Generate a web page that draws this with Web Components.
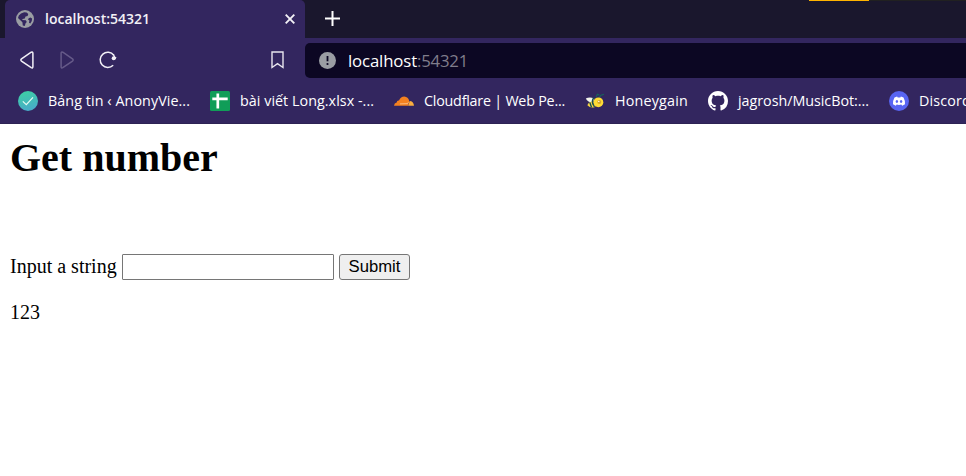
<!DOCTYPE html>
<html lang="vi"><head><meta charset="utf-8"><title>localhost:54321</title>
<style>html,body{margin:0;height:100%;overflow:hidden;background:#fff}</style></head>
<body><browser-window></browser-window>
<script>
const define = (name, html, ready) => customElements.define(name, class extends HTMLElement {
  connectedCallback() {
    if (!this.shadowRoot) this.attachShadow({mode:'open'}).innerHTML = html;
    if (ready) ready.call(this, this.shadowRoot);
  }
});

// A one-line label whose letters are spaced to fill a given width.
define('fit-label', `<style>:host{display:block;flex:none;white-space:nowrap}span{display:inline-block;white-space:pre}</style><span></span>`, function(root){
  const s = root.querySelector('span'), w = +this.getAttribute('width');
  s.textContent = this.getAttribute('text');
  const n = s.getBoundingClientRect().width;
  s.style.letterSpacing = ((w - n) / s.textContent.length) + 'px';
  this.style.width = w + 'px';
});

const icons = {
  globe:`<svg width="18" height="18" viewBox="0 0 18 18"><circle cx="9" cy="9" r="9" fill="#9a9da3"/><path d="M8.2 2.2 10.6 2.6 12.3 4 11.6 6 9.5 6.6 8.8 8.6 6.6 9 6.2 10 9.8 10.2 10.8 12 9.6 13.2 8.8 16 6.8 15.4 6.4 12.2 2 8.1 2.8 5.6 5 3.4zM12.7 8.2 14.4 7.6 16.1 8.5 15.8 11 14.3 13.6 13 12.8 13.4 10.6 12 9.6z" fill="#33265f"/></svg>`,
  close:`<svg width="10" height="10" viewBox="0 0 10 10"><path d="M.7.7 9.3 9.3M9.3.7.7 9.3" stroke="#f2f0f6" stroke-width="1.9"/></svg>`,
  plus:`<svg width="15" height="15" viewBox="0 0 15 15"><path d="M7.5 0V15M0 7.5H15" stroke="#fff" stroke-width="2"/></svg>`,
  back:`<svg width="14" height="18" viewBox="0 0 14 18"><path d="M11.2 1.2Q12.9.4 12.9 2.4V15.6Q12.9 17.6 11.2 16.7L1.5 10.1Q.2 9 1.5 7.9Z" fill="none" stroke="#f2f0f6" stroke-width="1.5"/></svg>`,
  forward:`<svg width="14" height="18" viewBox="0 0 14 18"><path d="M2.8 1.2Q1.1.4 1.1 2.4V15.6Q1.1 17.6 2.8 16.7L12.5 10.1Q13.8 9 12.5 7.9Z" fill="none" stroke="#665a89" stroke-width="1.5"/></svg>`,
  reload:`<svg width="18" height="18" viewBox="0 0 18 18"><path d="M14.8 4.2A7.6 7.6 0 1 0 14.2 14.2" fill="none" stroke="#f2f0f6" stroke-width="1.5"/><path d="M14.3 3.4 15.8 6.2" stroke="#f2f0f6" stroke-width="1.3"/><circle cx="14.7" cy="7.2" r="2" fill="#f2f0f6"/><path d="M15 5.6 17.6 6.5 15.7 9z" fill="#f2f0f6"/></svg>`,
  bookmark:`<svg width="13" height="18" viewBox="0 0 13 18"><path d="M1 1H12V16.5L6.5 12.7 1 16.5Z" fill="none" stroke="#e8e5ee" stroke-width="1.4"/></svg>`,
  info:`<svg width="17" height="17" viewBox="0 0 17 17"><circle cx="8.5" cy="8.5" r="8.5" fill="#9a9da3"/><path d="M8.5 4V9.3" stroke="#0c0723" stroke-width="1.8"/><circle cx="8.5" cy="12" r="1.1" fill="#0c0723"/></svg>`,
  check:`<svg width="20" height="20" viewBox="0 0 20 20"><defs><linearGradient id="g" x1="0" y1="0" x2=".3" y2="1"><stop stop-color="#3cd3a1"/><stop offset="1" stop-color="#48acc8"/></linearGradient></defs><circle cx="10" cy="10" r="10" fill="url(#g)"/><path d="M4.8 10.4 8.3 13.6 15 6.4" fill="none" stroke="#e4fbf4" stroke-width="1.2"/></svg>`,
  sheet:`<svg width="20" height="20" viewBox="0 0 20 20"><rect width="20" height="20" rx="1.5" fill="#109d58"/><path d="M2.3 7.9H17.7M7.8 2.5V17.5" stroke="#fff" stroke-width="2.7"/></svg>`,
  cloud:`<svg width="20" height="20" viewBox="0 0 20 20"><path d="M0 14.7Q.2 12 2.7 11.5 2.9 9.3 5 9.6 6.7 5.8 10.3 5.6 14.2 5.9 15.2 9.9L14.2 14.7Z" fill="#f48120"/><path d="M14.2 14.7 15.6 10Q19.5 10.2 20 14.7Z" fill="#faad3f"/><path d="M6 12.9 13.5 12.6 14.4 11.2" fill="none" stroke="#ffe2be" stroke-width=".6"/></svg>`,
  bee:`<svg width="20" height="20" viewBox="0 0 20 20"><path d="M11 6 12.4 3.3 14.3 4.1M14 6.8 16 4.2 19 3.2" fill="none" stroke="#17625c" stroke-width="1.2"/><path d="M.8 7.6Q4.5 5.4 9.2 7.5L8 11.5Q3 11.7.8 7.6Z" fill="#f4f5ec"/><path d="M2.4 14.2Q3.4 11 8 10L10.5 15.7Q6 18 2.4 14.2Z" fill="#f8d444"/><path d="M4.8 11.5 6.5 16.2M7.5 10.5 9.4 16" stroke="#184f51" stroke-width="1.4"/><path d="M9 6.5Q6.2 10 8.4 14" fill="none" stroke="#184f51" stroke-width="1.5"/><circle cx="13.4" cy="11.3" r="4.9" fill="#ffdb35"/><circle cx="14.3" cy="11.1" r="2" fill="#d6a72d"/><circle cx="13.8" cy="10.4" r=".7" fill="#fff"/></svg>`,
  github:`<svg width="20" height="20" viewBox="0 0 16 16"><path fill="#fff" fill-rule="evenodd" d="M8 0C3.58 0 0 3.58 0 8c0 3.54 2.29 6.53 5.47 7.59.4.07.55-.17.55-.38 0-.19-.01-.82-.01-1.49-2.01.37-2.53-.49-2.69-.94-.09-.23-.48-.94-.82-1.13-.28-.15-.68-.52-.01-.53.63-.01 1.08.58 1.23.82.72 1.21 1.87.87 2.33.66.07-.52.28-.87.51-1.07-1.78-.2-3.64-.89-3.64-3.95 0-.87.31-1.59.82-2.15-.08-.2-.36-1.02.08-2.12 0 0 .67-.21 2.2.82.64-.18 1.32-.27 2-.27s1.36.09 2 .27c1.53-1.04 2.2-.82 2.2-.82.44 1.1.16 1.92.08 2.12.51.56.82 1.27.82 2.15 0 3.07-1.87 3.75-3.65 3.95.29.25.54.73.54 1.48 0 1.07-.01 1.93-.01 2.2 0 .21.15.46.55.38A8.01 8.01 0 0 0 16 8c0-4.42-3.58-8-8-8z"/></svg>`,
  discord:`<svg width="20" height="20" viewBox="0 0 20 20"><circle cx="10" cy="10" r="10" fill="#5865f2"/><path fill="#fff" fill-rule="evenodd" d="M8.1 5.5 5.5 6.4Q3.7 9.5 4 13.3L6.8 14.8 7.7 13.6Q10 14.2 12.3 13.6L13.2 14.8 16 13.3Q16.3 9.5 14.5 6.4L11.9 5.5 11.3 6.5H8.7ZM7.9 9Q9.2 9.2 9.2 10.5 9.1 11.8 7.9 11.9 6.7 11.8 6.6 10.5 6.7 9.2 7.9 9ZM12.1 9Q13.3 9.2 13.4 10.5 13.3 11.8 12.1 11.9 10.9 11.8 10.8 10.5 10.9 9.2 12.1 9Z"/></svg>`
};
define('ui-icon', `<style>:host{display:block;flex:none}svg{display:block}</style><div></div>`, function(root){
  root.querySelector('div').innerHTML = icons[this.getAttribute('name')];
});

define('tab-strip', `<style>
:host{display:flex;height:38px;background:linear-gradient(#212121,#212121) 869px 0/97px 1px no-repeat,linear-gradient(#ffb300,#ffb300) 809px 0/60px 1px no-repeat,#1a172d;padding-left:5px;box-sizing:border-box}
.tab{box-sizing:border-box;width:300px;height:38px;padding:0 10px 0 11px;display:flex;align-items:center;background:#33265f;border-radius:5px 5px 0 0}
fit-label{margin-left:11px;font:600 14px/20px "Open Sans",sans-serif;color:#f2f0f6}
.x{margin-left:auto}.plus{margin:11px 0 0 20px}
</style><div class="tab"><ui-icon name="globe"></ui-icon><fit-label text="localhost:54321" width="105"></fit-label><ui-icon class="x" name="close"></ui-icon></div><ui-icon class="plus" name="plus"></ui-icon>`);

define('nav-bar', `<style>
:host{display:flex;align-items:center;height:45px;box-sizing:border-box;padding:0 0 0 20px}
.fwd{margin-left:26px}.re{margin-left:25px}.bm{margin:0 21px 0 auto}
.controls{display:flex;align-items:center;width:285px;padding-bottom:1px}
.address{flex:1;height:35px;display:flex;align-items:center;background:#0c0723;border-radius:5px 0 0 5px;padding-left:14px;font:16.8px/23px "Open Sans",sans-serif;color:#fff}
.host{margin-left:12px}.port{color:#807d8b}
</style><div class="controls"><ui-icon name="back"></ui-icon><ui-icon class="fwd" name="forward"></ui-icon><ui-icon class="re" name="reload"></ui-icon><ui-icon class="bm" name="bookmark"></ui-icon></div>
<div class="address"><ui-icon name="info"></ui-icon><fit-label class="host" text="localhost" width="69"></fit-label><fit-label class="port" text=":54321" width="51"></fit-label></div>`);

define('bookmark-link', `<style>:host{display:flex;align-items:center;gap:10px;flex:none;font:14.3px/20px "Open Sans",sans-serif;color:#fff}</style><div></div><slot></slot>`, function(root){
  root.querySelector('div').innerHTML = `<ui-icon name="${this.getAttribute('icon')}"></ui-icon>`;
});
define('bookmark-bar', `<style>:host{display:flex;align-items:center;gap:20px;height:41px;box-sizing:border-box;padding:0 0 4px 18px;overflow:hidden;border-bottom:1px solid #2d2254}</style>
<bookmark-link icon="check"><fit-label text="Bảng tin ‹ AnonyVie..." width="142"></fit-label></bookmark-link>
<bookmark-link icon="sheet"><fit-label text="bài viết Long.xlsx -..." width="134"></fit-label></bookmark-link>
<bookmark-link icon="cloud"><fit-label text="Cloudflare | Web Pe..." width="141"></fit-label></bookmark-link>
<bookmark-link icon="bee"><fit-label text="Honeygain" width="73"></fit-label></bookmark-link>
<bookmark-link icon="github"><fit-label text="jagrosh/MusicBot:..." width="131"></fit-label></bookmark-link>
<bookmark-link icon="discord"><fit-label text="Discord" width="52"></fit-label></bookmark-link>`);

define('number-page', `<style>
:host{display:block;padding:11px 10px 10px;font:20px/23px "Liberation Serif",serif;color:#000}
h1{font-size:40px;line-height:46px;margin:0}
form{display:flex;align-items:center;margin:73px 0 0;height:26px}
label{margin-right:5px;padding-bottom:2px;white-space:nowrap;width:107px}
input{box-sizing:border-box;width:212px;height:26px;border:1px solid #767676;border-radius:1px;margin:0 5px 0 0;padding:1px 3px;font:16.67px "Liberation Sans",sans-serif}
button{box-sizing:border-box;width:71px;height:26px;border:1px solid #767676;border-radius:3px;background:#efefef;color:#000;padding:0;margin:0;font:16.67px/22px "Liberation Sans",sans-serif}
p{margin:21px 0 0}
</style><h1>Get number</h1><form><label for="s">Input a string</label><input id="s" type="text"><button type="button">Submit</button></form><p>123</p>`);

define('browser-window', `<style>:host{display:block;width:966px;height:476px;overflow:hidden;background:#fff}.chrome{background:#33265f;height:124px}</style>
<div class="chrome"><tab-strip></tab-strip><nav-bar></nav-bar><bookmark-bar></bookmark-bar></div><number-page></number-page>`);
</script></body></html>
